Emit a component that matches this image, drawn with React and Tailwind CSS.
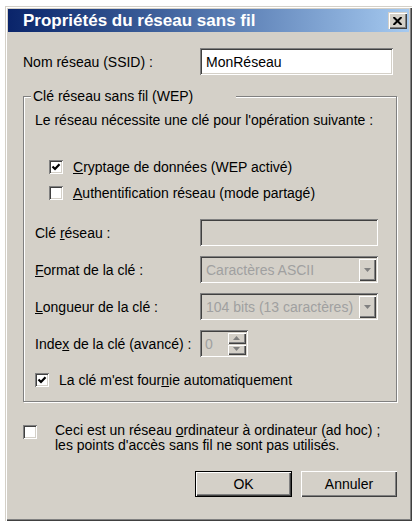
import { Fragment } from "react";

const sunken =
  "shadow-[inset_1px_1px_0_#808080,inset_-1px_-1px_0_#ffffff,inset_2px_2px_0_#404040,inset_-2px_-2px_0_#d4d0c8]";
const raised =
  "shadow-[inset_1px_1px_0_#ffffff,inset_-1px_-1px_0_#404040,inset_-2px_-2px_0_#808080]";
const raisedSmall =
  "shadow-[inset_1px_1px_0_#d4d0c8,inset_2px_2px_0_#ffffff,inset_-1px_-1px_0_#404040,inset_-2px_-2px_0_#808080]";

function Box({ checked }) {
  return (
    <span className={`w-[14px] h-[14px] bg-white shrink-0 flex items-center justify-center ${sunken}`}>
      {checked && (
        <svg width="14" height="14" viewBox="0 0 14 14">
          <polyline points="3.5,6.5 6,9 10.5,4.2" fill="none" stroke="#000" strokeWidth="2.2" />
        </svg>
      )}
    </span>
  );
}

function Arrow({ up }) {
  return (
    <svg width="7" height="4" viewBox="0 0 7 4">
      <polygon points={up ? "0,4 7,4 3.5,0" : "0,0 7,0 3.5,4"} fill="#808080" />
    </svg>
  );
}

function Combo({ value }) {
  return (
    <div className={`w-[178px] h-[27px] flex items-stretch p-[2px] bg-[#d4d0c8] ${sunken}`}>
      <span className="flex-1 flex items-center pl-[4px] text-[#a0a0a0] whitespace-nowrap overflow-hidden">
        {value}
      </span>
      <span className={`w-[18px] flex items-center justify-center bg-[#d4d0c8] ${raisedSmall}`}>
        <Arrow />
      </span>
    </div>
  );
}

function Row({ label, children }) {
  return (
    <div className="flex items-center h-[27px]">
      <span className="w-[165px] whitespace-nowrap">{label}</span>
      {children}
    </div>
  );
}

export default function App() {
  return (
    <div className="w-[415px] h-[523px] bg-white pt-[6px] pl-[5px] font-['Liberation_Sans',Arial,sans-serif] text-[14px] leading-[16px] text-black">
      <div className="w-[407px] h-[515px] bg-[#d4d0c8] p-[3px] flex flex-col shadow-[inset_1px_1px_0_#d4d0c8,inset_2px_2px_0_#ffffff,inset_-1px_-1px_0_#404040,inset_-2px_-2px_0_#808080]">
        <div className="h-[23px] flex items-center justify-between bg-linear-to-r from-[#0a246a] to-[#a6caf0] pl-[15px] pr-[2px]">
          <span className="text-white font-bold text-[17px] whitespace-nowrap">Propriétés du réseau sans fil</span>
          <span className={`w-[19px] h-[17px] bg-[#d4d0c8] flex items-center justify-center ${raisedSmall}`}>
            <svg width="9" height="8" viewBox="0 0 9 8">
              <path d="M0.5 0 L8.5 8 M8.5 0 L0.5 8" stroke="#000" strokeWidth="2" />
            </svg>
          </span>
        </div>

        <div className="pl-[15px] pr-[12px] flex flex-col">
          <div className="mt-[16px] flex items-center h-[27px]">
            <span className="w-[177px] whitespace-nowrap">Nom réseau (SSID) :</span>
            <div className={`w-[193px] h-[27px] bg-white flex items-center pl-[6px] ${sunken}`}>MonRéseau</div>
          </div>

          <fieldset className="mt-[13px] border border-[#808080] pl-[7px] pr-[10px] pt-[8px] pb-[13px] shadow-[1px_1px_0_#ffffff,inset_1px_1px_0_#ffffff]">
            <legend className="w-[205px] pl-[2px] bg-[#d4d0c8] whitespace-nowrap">Clé réseau sans fil (WEP)</legend>
            <div className="ml-[4px] flex flex-col">
              <div className="whitespace-nowrap">Le réseau nécessite une clé pour l'opération suivante :</div>
              <label className="mt-[31px] ml-[14px] flex items-center gap-[10px] whitespace-nowrap">
                <Box checked />
                <span>
                  <u>C</u>ryptage de données (WEP activé)
                </span>
              </label>
              <label className="mt-[10px] ml-[14px] flex items-center gap-[10px] whitespace-nowrap">
                <Box />
                <span>
                  <u>A</u>uthentification réseau (mode partagé)
                </span>
              </label>

              <div className="mt-[18px] flex flex-col gap-[10px]">
                <Row
                  label={
                    <Fragment>
                      Clé <u>r</u>éseau :
                    </Fragment>
                  }
                >
                  <div className={`w-[178px] h-[27px] bg-[#d4d0c8] ${sunken}`} />
                </Row>
                <Row
                  label={
                    <Fragment>
                      <u>F</u>ormat de la clé :
                    </Fragment>
                  }
                >
                  <Combo value="Caractères ASCII" />
                </Row>
                <Row
                  label={
                    <Fragment>
                      <u>L</u>ongueur de la clé :
                    </Fragment>
                  }
                >
                  <Combo value="104 bits (13 caractères)" />
                </Row>
                <Row
                  label={
                    <Fragment>
                      Inde<u>x</u> de la clé (avancé) :
                    </Fragment>
                  }
                >
                  <div className={`w-[48px] h-[27px] flex items-stretch p-[2px] bg-[#d4d0c8] ${sunken}`}>
                    <span className="flex-1 flex items-center pl-[3px] text-[#a0a0a0]">0</span>
                    <span className="w-[19px] flex flex-col">
                      <span className={`flex-1 flex items-center justify-center ${raisedSmall}`}>
                        <Arrow up />
                      </span>
                      <span className={`flex-1 flex items-center justify-center ${raisedSmall}`}>
                        <Arrow />
                      </span>
                    </span>
                  </div>
                </Row>
              </div>

              <label className="mt-[15px] flex items-center gap-[10px] whitespace-nowrap">
                <Box checked />
                <span>
                  La clé m'est four<u>n</u>ie automatiquement
                </span>
              </label>
            </div>
          </fieldset>

          <div className="mt-[21px] flex items-start">
            <span className="mt-[2px]">
              <Box />
            </span>
            <p className="ml-[18px] leading-[15px]">
              Ceci est un réseau <u>o</u>rdinateur à ordinateur (ad hoc) ;
              <br />
              les points d'accès sans fil ne sont pas utilisés.
            </p>
          </div>

          <div className="mt-[18px] flex justify-end gap-[9px]">
            <button className="w-[97px] h-[26px] border border-black bg-[#d4d0c8] shadow-[inset_1px_1px_0_#ffffff,inset_-1px_-1px_0_#404040,inset_-2px_-2px_0_#808080]">
              OK
            </button>
            <button className={`w-[96px] h-[26px] bg-[#d4d0c8] ${raised}`}>Annuler</button>
          </div>
        </div>
      </div>
    </div>
  );
}
